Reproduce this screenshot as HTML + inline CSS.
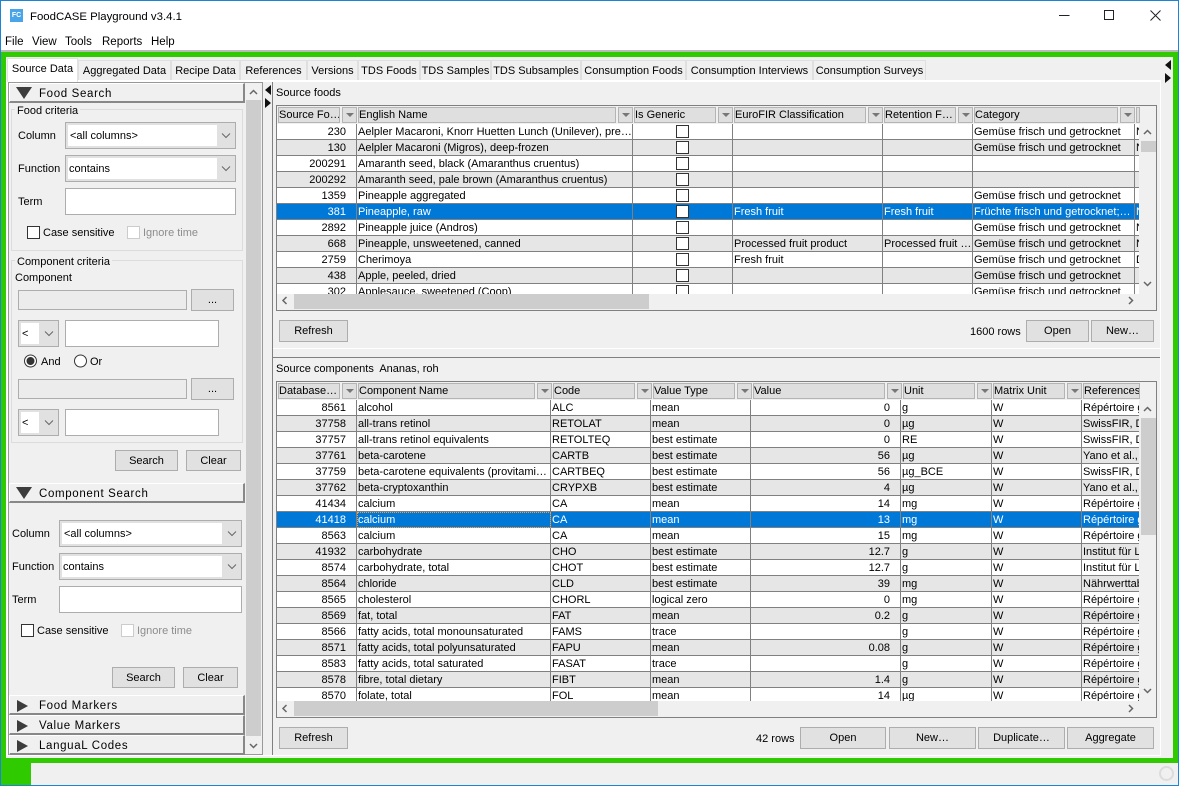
<!DOCTYPE html>
<html><head><meta charset="utf-8"><title>FoodCASE Playground</title>
<style>
html,body{margin:0;padding:0;background:#f0f0f0}
#w{position:relative;width:1179px;height:786px;overflow:hidden;background:#f0f0f0;font:11px/16px "Liberation Sans",sans-serif;color:#000}
#w div,#w span,#w i,#w b,#w u{position:absolute;box-sizing:border-box;font-style:normal;font-weight:normal;text-decoration:none;white-space:nowrap}
.l{line-height:16px;margin-top:1px}
.btn{background:#e1e1e1;border:1px solid #adadad;text-align:center;line-height:20px;color:#000}
.inp{background:#fff;border:1px solid #adadad}
.dis{background:#ececec;border:1px solid #adadad}
.cb{background:#e1e1e1;border:1px solid #adadad;height:27px}
.cb u{left:2px;top:2px;bottom:2px;background:#fff;line-height:23px;padding-left:1px}
.cb svg,.sv{position:absolute}
.chk{width:13px;height:13px;background:#fff;border:1px solid #333}
.gb{border:1px solid #dcdcdc}
.hd{left:9px;width:236px;background:#f0f0f0;border-top:1px solid #fff;border-left:1px solid #fff;border-right:2px solid #888;border-bottom:2px solid #888;letter-spacing:.65px;font-size:11.500px}
.hd span{left:29px;top:2px}
.td{width:0;height:0;left:6px;top:3px;border-left:8.500px solid transparent;border-right:8.500px solid transparent;border-top:12px solid #3c3c3c}
.tr{width:0;height:0;left:7px;top:4px;border-top:6px solid transparent;border-bottom:6px solid transparent;border-left:11px solid #3c3c3c}
.tab{top:60px;height:20px;background:#f0f0f0;border:1px solid #dfdfdf;border-bottom:0;text-align:center;line-height:20px}
.h{height:16px;background:#dfdfdf;border:1px solid #b4b4b4;padding-left:0;line-height:15px;overflow:hidden}
.s{height:16px;width:15px;background:#dfdfdf;border:1px solid #b4b4b4}
.s:after{content:"";position:absolute;left:3px;top:5px;border-left:4px solid transparent;border-right:4px solid transparent;border-top:4px solid #777}
table{border-collapse:separate;border-spacing:0;table-layout:fixed;position:absolute;left:0;top:0}
td{height:16px;padding:1px 0 0 1px;border-right:1px solid #808080;border-bottom:1px solid #808080;overflow:hidden;white-space:nowrap;box-sizing:border-box;line-height:14px;font-size:11px;position:relative;vertical-align:top}
tr:nth-child(even) td{background:#e6e6e6}
tr:nth-child(odd) td{background:#fff}
tr.x td{background:#0078d7;color:#fff}
td.n{text-align:right;padding:1px 10px 0 0}
td.c{padding:0}
td.c em{display:block;box-sizing:border-box;width:13px;height:13px;margin:1px 0 0 43px;background:#fff;border:1px solid #333}
</style></head><body><div id="w">

<!-- window frame -->
<div style="left:0;top:0;width:1179px;height:786px;border:1px solid #1a85d6;z-index:9;pointer-events:none"></div>
<div style="left:1px;top:1px;width:1177px;height:50px;background:#fff"></div>
<div style="left:10px;top:9px;width:13px;height:13px;background:#4aa5e8;color:#fff;font:bold 7px/13px 'Liberation Sans',sans-serif;text-align:center">FC</div>
<div class="l" style="left:30px;top:8px;font-size:11.400px">FoodCASE Playground v3.4.1</div>
<svg class="sv" style="left:1050px;top:8px" width="120" height="16" fill="none" stroke="#222" stroke-width="1"><path d="M9 7.500H19.500"/><rect x="54.500" y="2.500" width="9" height="9"/><path d="M100.500 2.500L110.500 12.500M110.500 2.500L100.500 12.500"/></svg>
<div class="l" style="left:5px;top:33px;font-size:11.500px">File</div>
<div class="l" style="left:32px;top:33px;font-size:11.500px">View</div>
<div class="l" style="left:65px;top:33px;font-size:11.500px">Tools</div>
<div class="l" style="left:102px;top:33px;font-size:11.500px">Reports</div>
<div class="l" style="left:151px;top:33px;font-size:11.500px">Help</div>
<div style="left:1px;top:50px;width:1177px;height:2px;background:#b9b9b9"></div>

<!-- green -->
<div style="left:1px;top:52px;width:1177px;height:5px;background:#2fcb00"></div>
<div style="left:1px;top:52px;width:5px;height:733px;background:#2fcb00"></div>
<div style="left:1173px;top:52px;width:5px;height:711px;background:#2fcb00"></div>
<div style="left:1px;top:758px;width:1177px;height:5px;background:#2fcb00"></div>
<div style="left:1px;top:758px;width:30px;height:27px;background:#2fcb00"></div>
<div style="left:1159px;top:766px;width:15px;height:15px;border:2px solid #dcdcdc;border-radius:50%"></div>

<!-- tabs -->
<div class="tab" style="left:78px;width:93px">Aggregated Data</div>
<div class="tab" style="left:171px;width:69px">Recipe Data</div>
<div class="tab" style="left:240px;width:67px">References</div>
<div class="tab" style="left:307px;width:51px">Versions</div>
<div class="tab" style="left:358px;width:62px">TDS Foods</div>
<div class="tab" style="left:420px;width:71px">TDS Samples</div>
<div class="tab" style="left:491px;width:90px">TDS Subsamples</div>
<div class="tab" style="left:581px;width:105px">Consumption Foods</div>
<div class="tab" style="left:686px;width:127px">Consumption Interviews</div>
<div class="tab" style="left:813px;width:113px">Consumption Surveys</div>
<div style="left:7px;top:80px;width:1154px;height:2px;background:#fff"></div>
<div style="left:1160px;top:80px;width:1px;height:676px;background:#fff"></div>
<div style="left:7px;top:755px;width:1154px;height:1px;background:#fff"></div>
<div style="left:6px;top:80px;width:2px;height:676px;background:#fff"></div>
<div style="left:7px;top:58px;width:71px;height:24px;background:#fff;border:1px solid #e2e2e2;border-bottom:0;text-align:center;line-height:20px">Source Data</div>
<svg class="sv" style="left:1165px;top:60px" width="7" height="24" fill="#111"><path d="M6 0V10L0 5ZM0 13V23L6 18Z"/></svg>

<!-- left panel -->
<div style="left:8px;top:82px;width:255px;height:673px;border:1px solid #999"></div>
<div style="left:246px;top:83px;width:16px;height:671px;background:#f0f0f0"></div>
<div style="left:246px;top:100px;width:15px;height:636px;background:#cdcdcd"></div>
<svg class="sv" style="left:249px;top:88px" width="10" height="10" fill="none" stroke="#666" stroke-width="1.500"><path d="M1 6L4.500 2.500L8 6"/></svg>
<svg class="sv" style="left:249px;top:741px" width="10" height="10" fill="none" stroke="#666" stroke-width="1.500"><path d="M1 3L4.500 6.500L8 3"/></svg>
<svg class="sv" style="left:265px;top:85px" width="7" height="24" fill="#111"><path d="M6 0V10L0 5ZM0 13V23L6 18Z"/></svg>
<div style="left:272px;top:82px;width:1px;height:673px;background:#808080"></div>

<div class="hd" style="top:83px;height:20px"><b class="td"></b><span>Food Search</span></div>
<div class="gb" style="left:11px;top:109px;width:232px;height:142px"></div>
<div class="l" style="left:15px;top:102px;background:#f0f0f0;padding:0 2px">Food criteria</div>
<div class="l" style="left:18px;top:127px">Column</div>
<div class="cb" style="left:65px;top:122px;width:171px"><u style="width:149px;padding-left:2px">&lt;all columns&gt;</u><svg style="left:155px;top:9px" width="10" height="8" fill="none" stroke="#666"><path d="M1 1.500L5 5.500L9 1.500"/></svg></div>
<div class="l" style="left:18px;top:160px">Function</div>
<div class="cb" style="left:65px;top:155px;width:171px"><u style="width:149px">contains</u><svg style="left:155px;top:9px" width="10" height="8" fill="none" stroke="#666"><path d="M1 1.500L5 5.500L9 1.500"/></svg></div>
<div class="l" style="left:18px;top:193px">Term</div>
<div class="inp" style="left:65px;top:188px;width:171px;height:27px"></div>
<div class="chk" style="left:27px;top:226px"></div><div class="l" style="left:43px;top:224px">Case sensitive</div>
<div class="chk" style="left:127px;top:226px;border-color:#ccc"></div><div class="l" style="left:143px;top:224px;color:#8c8c8c">Ignore time</div>

<div class="gb" style="left:11px;top:260px;width:232px;height:183px"></div>
<div class="l" style="left:15px;top:253px;background:#f0f0f0;padding:0 2px">Component criteria</div>
<div class="l" style="left:15px;top:269px">Component</div>
<div class="dis" style="left:18px;top:290px;width:169px;height:20px"></div>
<div class="btn" style="left:191px;top:289px;width:43px;height:22px">...</div>
<div class="cb" style="left:18px;top:320px;width:41px"><u style="width:18px">&lt;</u><svg style="left:25px;top:9px" width="10" height="8" fill="none" stroke="#666"><path d="M1 1.500L5 5.500L9 1.500"/></svg></div>
<div class="inp" style="left:65px;top:320px;width:154px;height:27px"></div>
<svg class="sv" style="left:23px;top:354px" width="70" height="14" fill="#fff" stroke="#333"><circle cx="7.500" cy="7" r="6"/><circle cx="7.500" cy="7" r="3.500" fill="#333"/><circle cx="57.500" cy="7" r="6"/></svg>
<div class="l" style="left:41px;top:353px">And</div>
<div class="l" style="left:90px;top:353px">Or</div>
<div class="dis" style="left:18px;top:379px;width:169px;height:20px"></div>
<div class="btn" style="left:191px;top:378px;width:43px;height:22px">...</div>
<div class="cb" style="left:18px;top:409px;width:41px"><u style="width:18px">&lt;</u><svg style="left:25px;top:9px" width="10" height="8" fill="none" stroke="#666"><path d="M1 1.500L5 5.500L9 1.500"/></svg></div>
<div class="inp" style="left:65px;top:409px;width:154px;height:27px"></div>
<div class="btn" style="left:115px;top:450px;width:63px;height:21px">Search</div>
<div class="btn" style="left:186px;top:450px;width:55px;height:21px">Clear</div>

<div class="hd" style="top:483px;height:20px"><b class="td"></b><span>Component Search</span></div>
<div class="l" style="left:12px;top:525px">Column</div>
<div class="cb" style="left:59px;top:520px;width:183px"><u style="width:160px;padding-left:2px">&lt;all columns&gt;</u><svg style="left:167px;top:9px" width="10" height="8" fill="none" stroke="#666"><path d="M1 1.500L5 5.500L9 1.500"/></svg></div>
<div class="l" style="left:12px;top:558px">Function</div>
<div class="cb" style="left:59px;top:553px;width:183px"><u style="width:160px">contains</u><svg style="left:167px;top:9px" width="10" height="8" fill="none" stroke="#666"><path d="M1 1.500L5 5.500L9 1.500"/></svg></div>
<div class="l" style="left:12px;top:591px">Term</div>
<div class="inp" style="left:59px;top:586px;width:183px;height:27px"></div>
<div class="chk" style="left:21px;top:624px"></div><div class="l" style="left:37px;top:622px">Case sensitive</div>
<div class="chk" style="left:121px;top:624px;border-color:#ccc"></div><div class="l" style="left:137px;top:622px;color:#8c8c8c">Ignore time</div>
<div class="btn" style="left:112px;top:667px;width:63px;height:21px">Search</div>
<div class="btn" style="left:183px;top:667px;width:55px;height:21px">Clear</div>

<div class="hd" style="top:695px;height:20px"><b class="tr"></b><span>Food Markers</span></div>
<div class="hd" style="top:715px;height:20px"><b class="tr"></b><span>Value Markers</span></div>
<div class="hd" style="top:735px;height:20px"><b class="tr"></b><span>LanguaL Codes</span></div>

<!-- top section -->
<div class="l" style="left:276px;top:84px">Source foods</div>
<div style="left:276px;top:105px;width:881px;height:206px;border:1px solid #808080;background:#f0f0f0"></div>
<div class="h" style="left:278px;top:107px;width:62px">Source Fo…</div><div class="s" style="left:342px;top:107px"></div>
<div class="h" style="left:358px;top:107px;width:258px">English Name</div><div class="s" style="left:618px;top:107px"></div>
<div class="h" style="left:634px;top:107px;width:82px">Is Generic</div><div class="s" style="left:718px;top:107px"></div>
<div class="h" style="left:734px;top:107px;width:132px">EuroFIR Classification</div><div class="s" style="left:868px;top:107px"></div>
<div class="h" style="left:884px;top:107px;width:72px">Retention F…</div><div class="s" style="left:958px;top:107px"></div>
<div class="h" style="left:974px;top:107px;width:144px">Category</div><div class="s" style="left:1120px;top:107px"></div>
<div class="h" style="left:1136px;top:107px;width:4px"></div>
<div style="left:277px;top:124px;width:862px;height:170px;overflow:hidden">
<table style="width:920px"><colgroup><col style="width:80px"><col style="width:276px"><col style="width:100px"><col style="width:150px"><col style="width:90px"><col style="width:162px"><col style="width:62px"></colgroup>
<tr><td class="n">230</td><td>Aelpler Macaroni, Knorr Huetten Lunch (Unilever), pre…</td><td class="c"><em></em></td><td></td><td></td><td>Gemüse frisch und getrocknet</td><td>N</td></tr>
<tr><td class="n">130</td><td>Aelpler Macaroni (Migros), deep-frozen</td><td class="c"><em></em></td><td></td><td></td><td>Gemüse frisch und getrocknet</td><td>N</td></tr>
<tr><td class="n">200291</td><td>Amaranth seed, black (Amaranthus cruentus)</td><td class="c"><em></em></td><td></td><td></td><td></td><td></td></tr>
<tr><td class="n">200292</td><td>Amaranth seed, pale brown (Amaranthus cruentus)</td><td class="c"><em></em></td><td></td><td></td><td></td><td></td></tr>
<tr><td class="n">1359</td><td>Pineapple aggregated</td><td class="c"><em></em></td><td></td><td></td><td>Gemüse frisch und getrocknet</td><td></td></tr>
<tr class="x"><td class="n">381</td><td>Pineapple, raw</td><td class="c"><em></em></td><td>Fresh fruit</td><td>Fresh fruit</td><td>Früchte frisch und getrocknet;…</td><td>N</td></tr>
<tr><td class="n">2892</td><td>Pineapple juice (Andros)</td><td class="c"><em></em></td><td></td><td></td><td>Gemüse frisch und getrocknet</td><td>N</td></tr>
<tr><td class="n">668</td><td>Pineapple, unsweetened, canned</td><td class="c"><em></em></td><td>Processed fruit product</td><td>Processed fruit …</td><td>Gemüse frisch und getrocknet</td><td>N</td></tr>
<tr><td class="n">2759</td><td>Cherimoya</td><td class="c"><em></em></td><td>Fresh fruit</td><td></td><td>Gemüse frisch und getrocknet</td><td>D</td></tr>
<tr><td class="n">438</td><td>Apple, peeled, dried</td><td class="c"><em></em></td><td></td><td></td><td>Gemüse frisch und getrocknet</td><td></td></tr>
<tr><td class="n">302</td><td>Applesauce, sweetened (Coop)</td><td class="c"><em></em></td><td></td><td></td><td>Gemüse frisch und getrocknet</td><td></td></tr>
</table></div>
<div style="left:1141px;top:141px;width:15px;height:11px;background:#cdcdcd"></div>
<svg class="sv" style="left:1143px;top:128px" width="10" height="10" fill="none" stroke="#666" stroke-width="1.500"><path d="M1 6L4.500 2.500L8 6"/></svg>
<svg class="sv" style="left:1143px;top:279px" width="10" height="10" fill="none" stroke="#666" stroke-width="1.500"><path d="M1 3L4.500 6.500L8 3"/></svg>
<div style="left:294px;top:294px;width:355px;height:15px;background:#cdcdcd"></div>
<svg class="sv" style="left:280px;top:296px" width="10" height="10" fill="none" stroke="#666" stroke-width="1.500"><path d="M6.500 1L3 4.500L6.500 8"/></svg>
<svg class="sv" style="left:1126px;top:296px" width="10" height="10" fill="none" stroke="#666" stroke-width="1.500"><path d="M3 1L6.500 4.500L3 8"/></svg>
<div class="btn" style="left:279px;top:320px;width:69px;height:22px">Refresh</div>
<div class="l" style="left:970px;top:323px">1600 rows</div>
<div class="btn" style="left:1026px;top:320px;width:63px;height:22px">Open</div>
<div class="btn" style="left:1091px;top:320px;width:63px;height:22px">New…</div>
<div style="left:273px;top:348px;width:887px;height:1px;background:#fff"></div>
<div style="left:273px;top:357px;width:887px;height:1px;background:#808080"></div>

<!-- bottom section -->
<div class="l" style="left:276px;top:360px;white-space:pre">Source components  Ananas, roh</div>
<div style="left:276px;top:381px;width:881px;height:337px;border:1px solid #808080;background:#f0f0f0"></div>
<div class="h" style="left:278px;top:383px;width:62px">Database…</div><div class="s" style="left:342px;top:383px"></div>
<div class="h" style="left:358px;top:383px;width:177px">Component Name</div><div class="s" style="left:537px;top:383px"></div>
<div class="h" style="left:553px;top:383px;width:82px">Code</div><div class="s" style="left:637px;top:383px"></div>
<div class="h" style="left:653px;top:383px;width:82px">Value Type</div><div class="s" style="left:737px;top:383px"></div>
<div class="h" style="left:753px;top:383px;width:132px">Value</div><div class="s" style="left:887px;top:383px"></div>
<div class="h" style="left:903px;top:383px;width:72px">Unit</div><div class="s" style="left:977px;top:383px"></div>
<div class="h" style="left:993px;top:383px;width:72px">Matrix Unit</div><div class="s" style="left:1067px;top:383px"></div>
<div class="h" style="left:1083px;top:383px;width:57px">References</div>
<div style="left:277px;top:400px;width:862px;height:301px;overflow:hidden">
<table style="width:920px"><colgroup><col style="width:80px"><col style="width:194px"><col style="width:100px"><col style="width:100px"><col style="width:150px"><col style="width:91px"><col style="width:90px"><col style="width:115px"></colgroup>
<tr><td class="n">8561</td><td>alcohol</td><td>ALC</td><td>mean</td><td class="n">0</td><td>g</td><td>W</td><td>Répértoire général</td></tr>
<tr><td class="n">37758</td><td>all-trans retinol</td><td>RETOLAT</td><td>mean</td><td class="n">0</td><td>µg</td><td>W</td><td>SwissFIR, Database</td></tr>
<tr><td class="n">37757</td><td>all-trans retinol equivalents</td><td>RETOLTEQ</td><td>best estimate</td><td class="n">0</td><td>RE</td><td>W</td><td>SwissFIR, Database</td></tr>
<tr><td class="n">37761</td><td>beta-carotene</td><td>CARTB</td><td>best estimate</td><td class="n">56</td><td>µg</td><td>W</td><td>Yano et al., 2005</td></tr>
<tr><td class="n">37759</td><td>beta-carotene equivalents (provitami…</td><td>CARTBEQ</td><td>best estimate</td><td class="n">56</td><td>µg_BCE</td><td>W</td><td>SwissFIR, Database</td></tr>
<tr><td class="n">37762</td><td>beta-cryptoxanthin</td><td>CRYPXB</td><td>best estimate</td><td class="n">4</td><td>µg</td><td>W</td><td>Yano et al., 2005</td></tr>
<tr><td class="n">41434</td><td>calcium</td><td>CA</td><td>mean</td><td class="n">14</td><td>mg</td><td>W</td><td>Répértoire général</td></tr>
<tr class="x"><td class="n">41418</td><td style="outline:1px dotted #f0a040;outline-offset:-1px;color:#fff">calcium</td><td>CA</td><td>mean</td><td class="n">13</td><td>mg</td><td>W</td><td>Répértoire général</td></tr>
<tr><td class="n">8563</td><td>calcium</td><td>CA</td><td>mean</td><td class="n">15</td><td>mg</td><td>W</td><td>Répértoire général</td></tr>
<tr><td class="n">41932</td><td>carbohydrate</td><td>CHO</td><td>best estimate</td><td class="n">12.7</td><td>g</td><td>W</td><td>Institut für Lebensmittel</td></tr>
<tr><td class="n">8574</td><td>carbohydrate, total</td><td>CHOT</td><td>best estimate</td><td class="n">12.7</td><td>g</td><td>W</td><td>Institut für Lebensmittel</td></tr>
<tr><td class="n">8564</td><td>chloride</td><td>CLD</td><td>best estimate</td><td class="n">39</td><td>mg</td><td>W</td><td>Nährwerttabelle</td></tr>
<tr><td class="n">8565</td><td>cholesterol</td><td>CHORL</td><td>logical zero</td><td class="n">0</td><td>mg</td><td>W</td><td>Répértoire général</td></tr>
<tr><td class="n">8569</td><td>fat, total</td><td>FAT</td><td>mean</td><td class="n">0.2</td><td>g</td><td>W</td><td>Répértoire général</td></tr>
<tr><td class="n">8566</td><td>fatty acids, total monounsaturated</td><td>FAMS</td><td>trace</td><td class="n"></td><td>g</td><td>W</td><td>Répértoire général</td></tr>
<tr><td class="n">8571</td><td>fatty acids, total polyunsaturated</td><td>FAPU</td><td>mean</td><td class="n">0.08</td><td>g</td><td>W</td><td>Répértoire général</td></tr>
<tr><td class="n">8583</td><td>fatty acids, total saturated</td><td>FASAT</td><td>trace</td><td class="n"></td><td>g</td><td>W</td><td>Répértoire général</td></tr>
<tr><td class="n">8578</td><td>fibre, total dietary</td><td>FIBT</td><td>mean</td><td class="n">1.4</td><td>g</td><td>W</td><td>Répértoire général</td></tr>
<tr><td class="n">8570</td><td>folate, total</td><td>FOL</td><td>mean</td><td class="n">14</td><td>µg</td><td>W</td><td>Répértoire général</td></tr>
</table></div>
<div style="left:1141px;top:418px;width:15px;height:117px;background:#cdcdcd"></div>
<svg class="sv" style="left:1143px;top:405px" width="10" height="10" fill="none" stroke="#666" stroke-width="1.500"><path d="M1 6L4.500 2.500L8 6"/></svg>
<svg class="sv" style="left:1143px;top:686px" width="10" height="10" fill="none" stroke="#666" stroke-width="1.500"><path d="M1 3L4.500 6.500L8 3"/></svg>
<div style="left:294px;top:701px;width:364px;height:15px;background:#cdcdcd"></div>
<svg class="sv" style="left:280px;top:704px" width="10" height="10" fill="none" stroke="#666" stroke-width="1.500"><path d="M6.500 1L3 4.500L6.500 8"/></svg>
<svg class="sv" style="left:1126px;top:704px" width="10" height="10" fill="none" stroke="#666" stroke-width="1.500"><path d="M3 1L6.500 4.500L3 8"/></svg>
<div class="btn" style="left:279px;top:727px;width:69px;height:22px">Refresh</div>
<div class="l" style="left:756px;top:730px">42 rows</div>
<div class="btn" style="left:800px;top:727px;width:86px;height:22px">Open</div>
<div class="btn" style="left:889px;top:727px;width:87px;height:22px">New…</div>
<div class="btn" style="left:978px;top:727px;width:87px;height:22px">Duplicate…</div>
<div class="btn" style="left:1067px;top:727px;width:87px;height:22px">Aggregate</div>

</div></body></html>
